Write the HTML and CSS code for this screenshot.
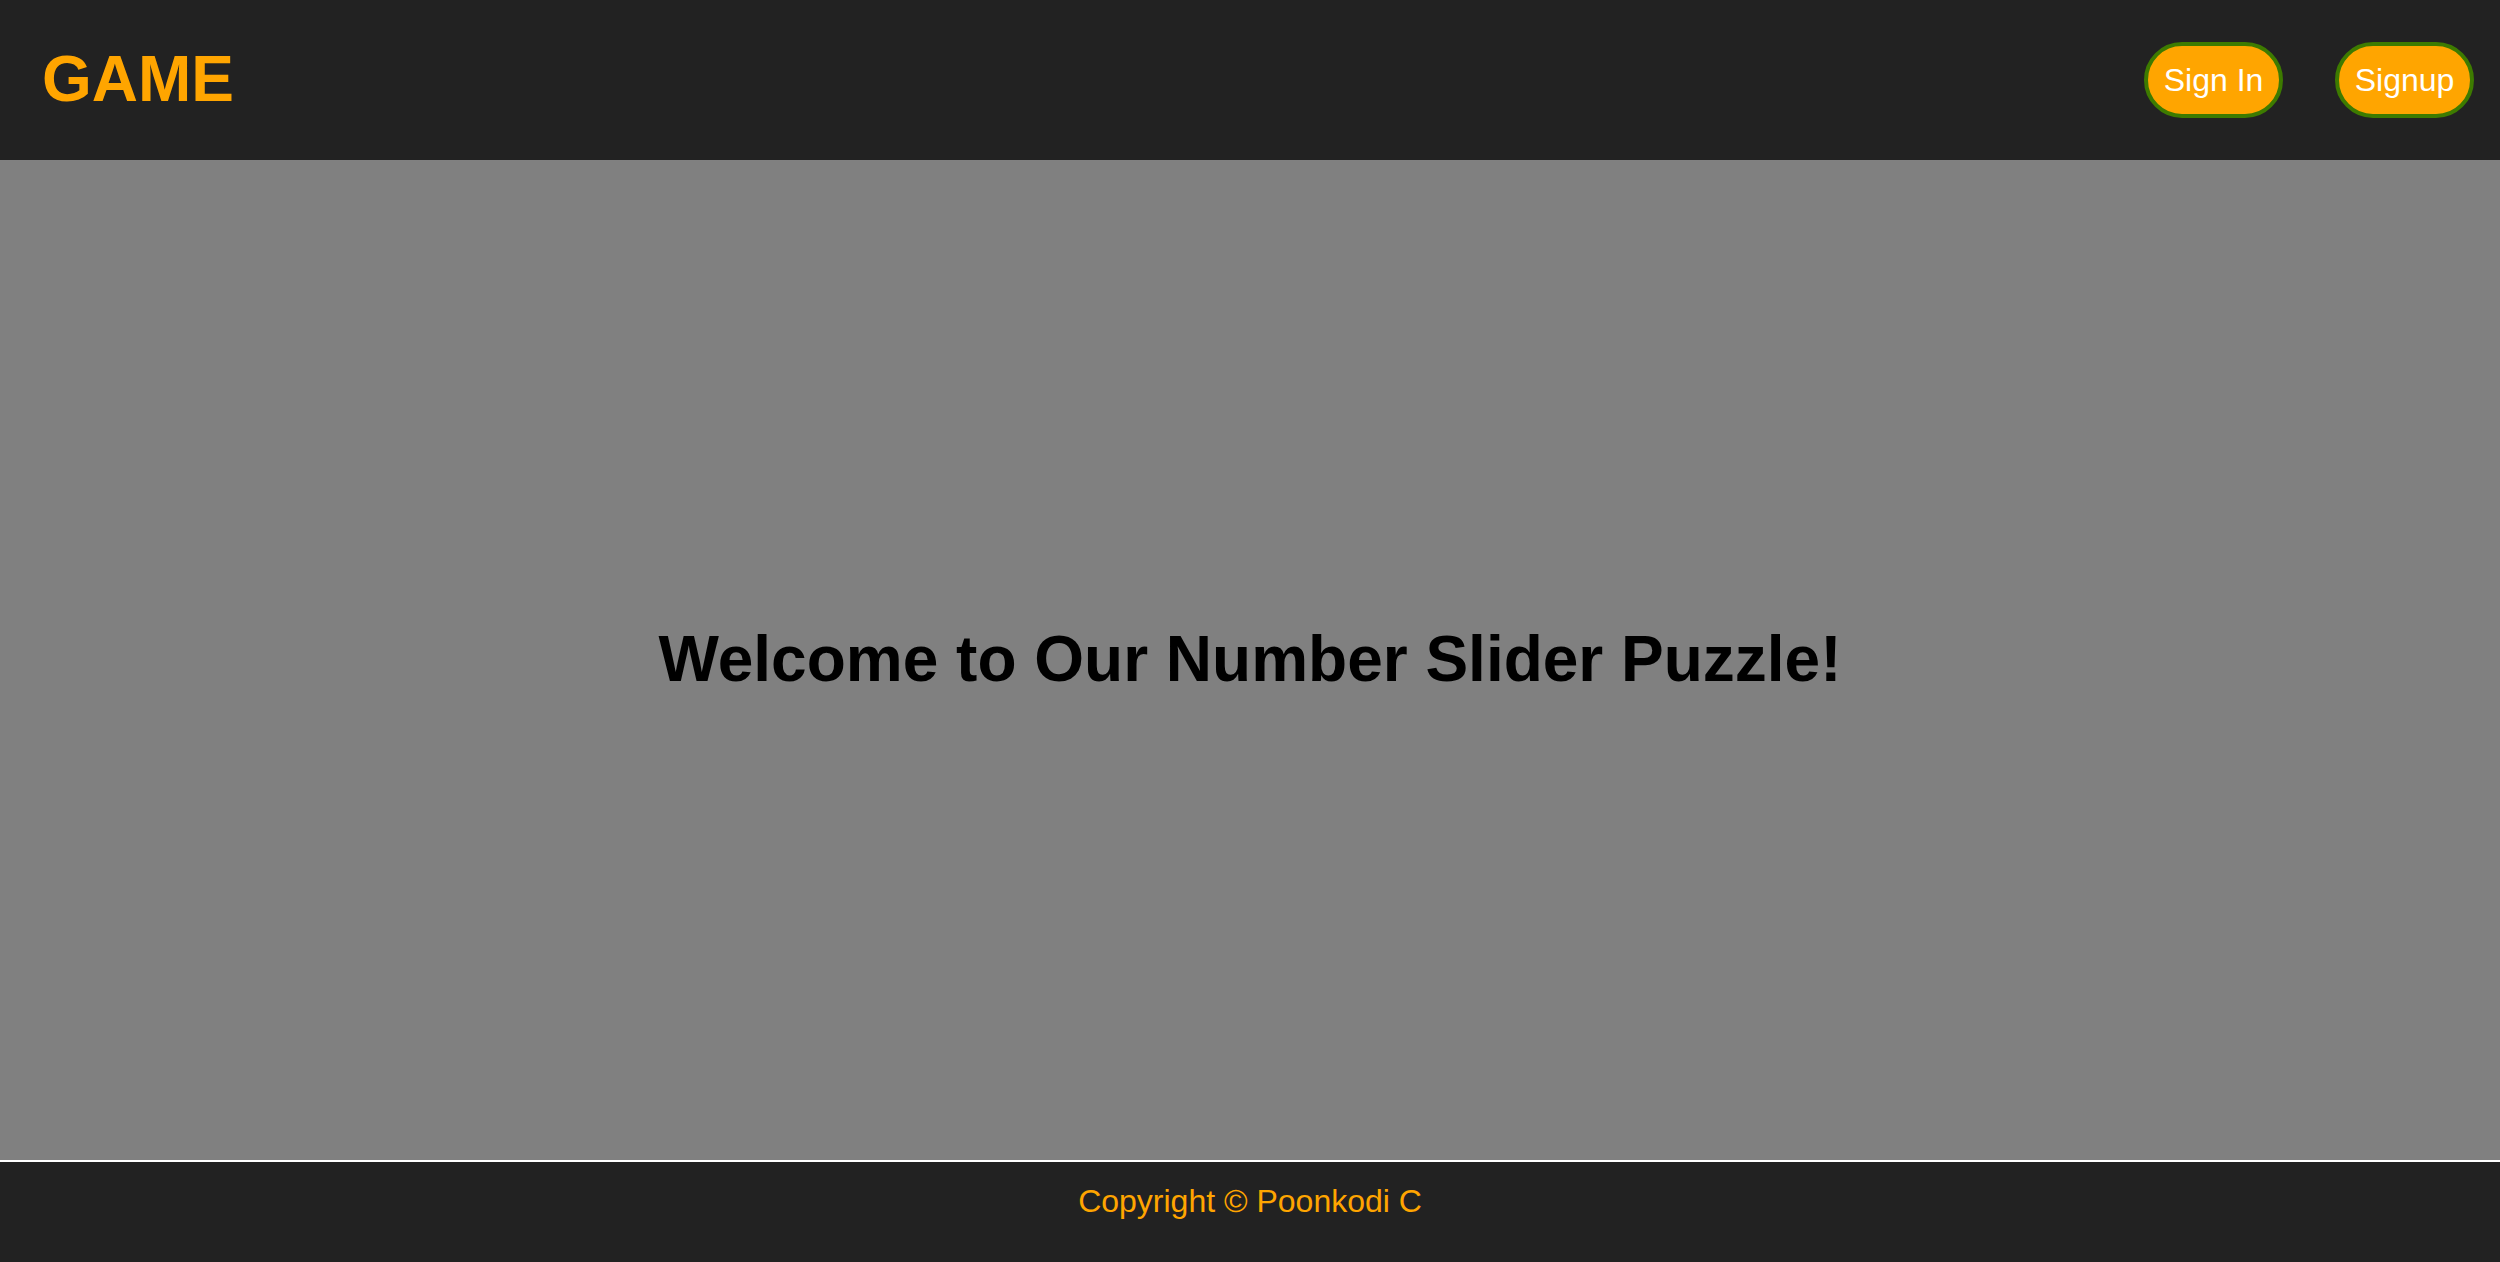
FILE: index.html
```html
<!DOCTYPE html>
<html lang="en">
<head>
<meta charset="utf-8">
<title>Game</title>
<link rel="stylesheet" href="styles.css">
</head>
<body>
<div class="page">
  <header class="topbar">
    <div class="logo">GAME</div>
    <nav class="actions">
      <button class="pill">Sign In</button>
      <button class="pill">Signup</button>
    </nav>
  </header>
  <main class="hero">
    <h1 class="title">Welcome to Our Number Slider Puzzle!</h1>
  </main>
  <footer class="footer">
    <p class="copy">Copyright © Poonkodi C</p>
  </footer>
</div>
</body>
</html>
```
FILE: styles.css
```css
* { box-sizing: border-box; }
html, body {
  margin: 0;
  padding: 0;
  height: 100%;
}
body {
  font-family: "Liberation Sans", Arial, Helvetica, sans-serif;
  background: #808080;
}
.page {
  display: flex;
  flex-direction: column;
  height: 1262px;
}
.topbar {
  height: 160px;
  background: #222222;
  display: flex;
  align-items: center;
  justify-content: space-between;
  padding: 0 26px 0 42px;
  flex: none;
}
.logo {
  color: #ffa500;
  font-size: 64px;
  font-weight: bold;
  line-height: 74px;
  margin-top: -2px;
}
.actions {
  display: flex;
  align-items: center;
  gap: 52px;
}
.pill {
  font-family: "Liberation Sans", Arial, Helvetica, sans-serif;
  font-size: 32px;
  line-height: 38px;
  color: #ffffff;
  background: #ffa500;
  border: 4px solid #3d7b00;
  border-radius: 40px;
  padding: 15px 15px;
  width: 139px;
  height: 76px;
  white-space: nowrap;
  cursor: pointer;
}
.hero {
  flex: 1;
  display: flex;
  align-items: center;
  justify-content: center;
  background: #808080;
}
.title {
  margin: 0;
  font-size: 64px;
  font-weight: bold;
  color: #000000;
  line-height: 74px;
  margin-top: -2px;
}
.footer {
  height: 102px;
  flex: none;
  background: #222222;
  border-top: 2px solid #ffffff;
  display: flex;
  justify-content: center;
  padding-top: 21px;
}
.copy {
  margin: 0;
  color: #ffa500;
  font-size: 32px;
  line-height: 37px;
}
```
